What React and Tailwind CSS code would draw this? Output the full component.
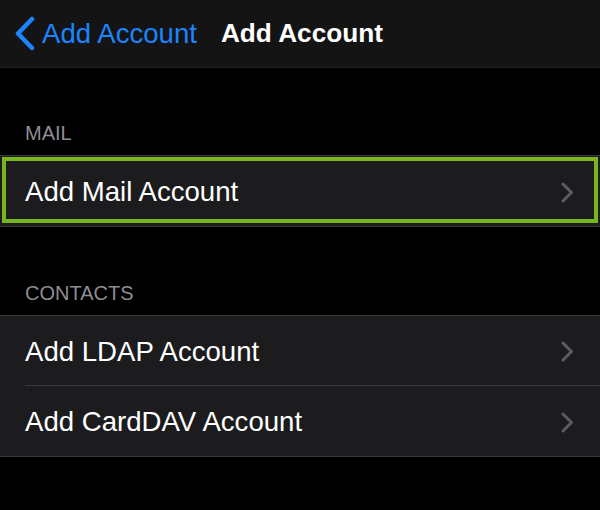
import React from 'react';

const font = { fontFamily: '"Liberation Sans", Arial, sans-serif' };

function Chevron() {
  return (
    <svg width="13" height="21" viewBox="0 0 13 21" className="shrink-0">
      <path d="M2 2 L10.5 10.5 L2 19" fill="none" stroke="#5b5b60" strokeWidth="3" strokeLinecap="round" strokeLinejoin="round" />
    </svg>
  );
}

function Row({ label, divider, highlight }) {
  return (
    <div className="relative bg-[#1c1c1e] h-[70px] flex items-center pl-[25px]">
      <div className={`flex-1 h-full flex items-center justify-between pr-[26px] pt-[2px] ${divider ? 'border-b border-[#38383a]' : ''}`}>
        <span className="text-[27.6px] text-white">{label}</span>
        <Chevron />
      </div>
      {highlight && (
        <div className="absolute left-[2px] right-[2px] top-[1px] bottom-[3px] border-4 border-[#79b51c]" />
      )}
    </div>
  );
}

function Header({ title }) {
  return (
    <div className="h-[88px] flex items-end pb-[10px] pl-[25px]">
      <span className="text-[20px] leading-6 text-[#8d8d93]">{title}</span>
    </div>
  );
}

export default function App() {
  return (
    <div className="w-[600px] h-[510px] bg-black overflow-hidden" style={font}>
      <header className="h-[68px] bg-[#141414] border-b border-[#1e1e1e] flex items-center">
        <div className="flex items-center pl-[14px]">
          <svg width="22" height="35" viewBox="0 0 22 35">
            <path d="M18 3 L4 17.5 L18 32" fill="none" stroke="#1a85ff" strokeWidth="4.5" strokeLinecap="round" strokeLinejoin="round" />
          </svg>
          <span className="ml-[6px] text-[27.6px] text-[#1a85ff]">Add Account</span>
        </div>
        <h1 className="ml-[24px] text-[26.2px] font-bold text-white">Add Account</h1>
      </header>

      <div className="-mt-px">
        <Header title="MAIL" />
        <div className="border-y border-[#38383a]">
          <Row label="Add Mail Account" highlight />
        </div>

        <Header title="CONTACTS" />
        <div className="border-y border-[#38383a]">
          <Row label="Add LDAP Account" divider />
          <Row label="Add CardDAV Account" />
        </div>
      </div>
    </div>
  );
}
